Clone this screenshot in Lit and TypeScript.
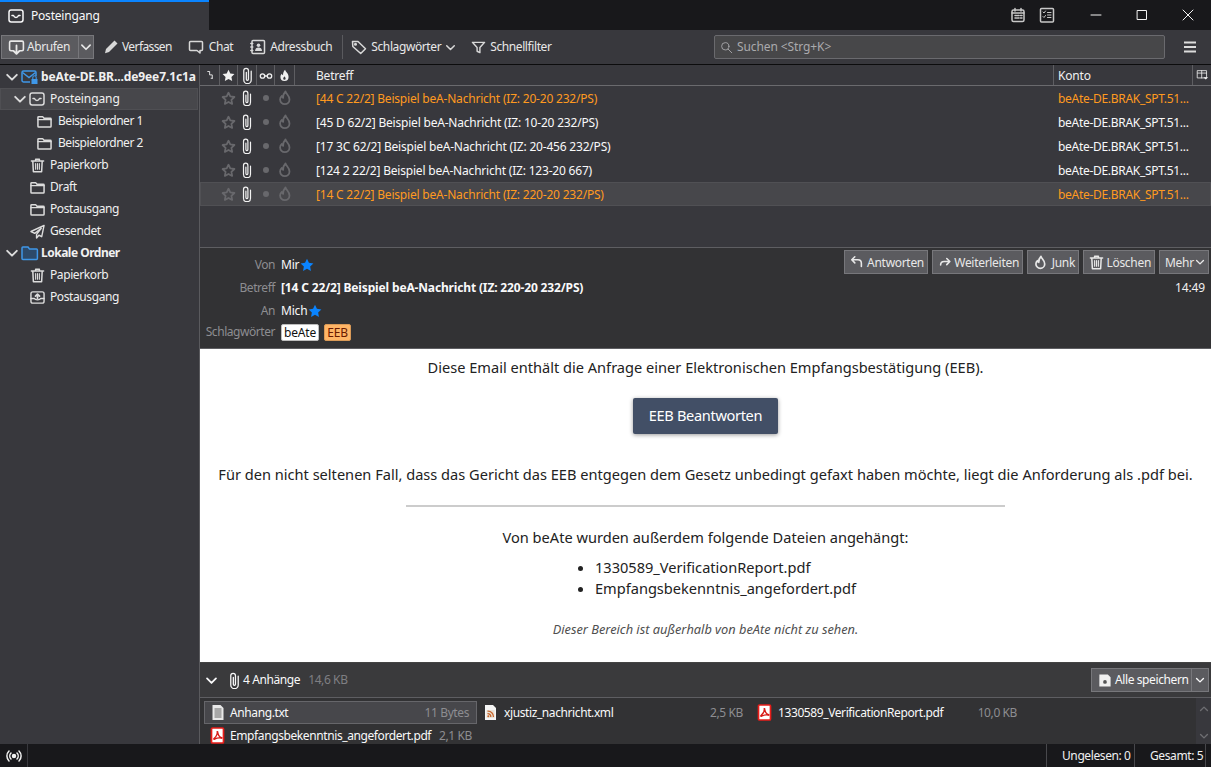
import { LitElement, html, css, svg } from "lit";
import { customElement } from "lit/decorators.js";

const ic = (body: unknown, size = 16, cls = "", vb = "0 0 16 16") =>
  html`<svg class="ic ${cls}" width=${size} height=${size} viewBox=${vb} fill="none" stroke="currentColor" stroke-width="1.500" stroke-linecap="round" stroke-linejoin="round">${body}</svg>`;

const chevron = (size = 12, cls = "") => ic(svg`<path d="M2.500 5.500 8 11l5.500-5.500" stroke-width="2.200"/>`, size, cls);
const inbox = (size = 16) => ic(svg`<rect x="1" y="2" width="14" height="12" rx="2.200"/><path d="M4 7.500h1.500c.6 1.400 1.400 2 2.500 2s1.900-.6 2.500-2H12"/>`, size);
const folder = (size = 16) => ic(svg`<path d="M1 13V3.500C1 3 1.400 2.800 1.800 2.800H6L7.500 4.500H14.200C14.700 4.500 15 4.800 15 5.200V13c0 .5-.3.800-.8.800H1.800C1.300 13.800 1 13.500 1 13Z" stroke-width="1.600"/><path d="M1 6h14"/>`, size);
const trash = (size = 16) => ic(svg`<path d="M1.500 3.200h13M6 3V1.300h4V3M3 3.500l.6 11.200h8.800L13 3.500" stroke-width="1.600"/><path d="M6 6v6M8 6v6M10 6v6" stroke-width="1.200"/>`, size);
const send = (size = 16) => ic(svg`<path d="M15 1.500 1 8l4 2 7-5.500-5 6.500v4l2.500-3 3 1.500Z"/>`, size);
const outbox = (size = 16) => ic(svg`<rect x="1" y="2" width="14" height="12" rx="2"/><path d="M1 9h3.500c.5 1 1.500 1.500 3.500 1.500s3-.5 3.500-1.500H15"/><path d="M8 9V4.500M5.800 6.500 8 4.300l2.200 2.200" stroke-width="1.800"/>`, size);
const star = (size = 16) => ic(svg`<path d="m8 1.800 1.900 4 4.400.6-3.200 3 .8 4.400L8 11.700l-3.900 2.100.8-4.400-3.200-3 4.400-.6Z" stroke-width="1.900"/>`, size);
const starFill = (size = 16, cls = "") => html`<svg class="ic ${cls}" width=${size} height=${size} viewBox="0 0 16 16" fill="currentColor"><path d="m8 .8 2.200 4.700 5.100.7-3.700 3.500.9 5.100L8 12.400l-4.500 2.400.9-5.100L.7 6.200l5.100-.7Z"/></svg>`;
const clip = (size = 16) => ic(svg`<path d="M11.500 4v8.200a3.500 3.500 0 0 1-7 0V3.400a2.200 2.200 0 0 1 4.400 0v8.200a1 1 0 0 1-2 0V5" stroke-width="1.200"/>`, size);
const flame = (size = 16) => ic(svg`<path d="M8.500 1.500c.5 2.500 4 4 4 8a4.700 4.700 0 0 1-9.400 0c0-1.700.8-2.800 1.700-3.600.2 1 .6 1.600 1.300 1.900C6 5.500 7 3 8.500 1.500Z" stroke-width="1.800"/>`, size);
const flameFill = (size = 16) => html`<svg class="ic" width=${size} height=${size} viewBox="0 0 16 16"><path fill="currentColor" d="M8.700 1c.5 2.700 4.300 4.300 4.300 8.700a5 5 0 0 1-10 0c0-1.900.9-3.100 1.800-3.900.2 1.100.6 1.700 1.400 2C6 5.300 7.100 2.600 8.700 1Z"/><path fill="#38383d" d="M8 9c.2 1 1.400 1.600 1.400 2.800a1.500 1.500 0 0 1-3 0C6.400 10.700 7.600 10 8 9Z"/></svg>`;
const pdf = () => html`<svg class="ic" width="15" height="17" viewBox="0 0 15 17"><rect x="1.500" y="1" width="12" height="15" rx="1" fill="#fff" stroke="#e81c18" stroke-width="1.700"/><path d="M7.200 4c.4 2.800-1.300 6-3.200 7.500-.6.500-.2 1.100.6.700 2-1 4.800-1.500 6.700-1 .8.200.8-.7 0-.8-2-.4-3.400-2.700-3.700-6.100" fill="none" stroke="#d81a16" stroke-width="1.300"/></svg>`;
const xml = () => html`<svg class="ic" width="15" height="17" viewBox="0 0 15 17"><path d="M2 1h8l3 3v12H2Z" fill="#f5f5f5"/><rect x="3.500" y="6" width="8" height="8" fill="#e8e2d8"/><path d="M4.500 7.200a5.500 5.500 0 0 1 6 5.800M4.500 9.700a3 3 0 0 1 3.300 3.300" fill="none" stroke="#c8642a" stroke-width="1.300"/><circle cx="5.300" cy="12.300" r="1" fill="#c8642a"/></svg>`;
const txt = () => html`<svg class="ic" width="16" height="17" viewBox="0 0 16 17"><path d="M2.500 1h8l3 3v12h-11Z" fill="#e8e8e8"/><path d="M4.500 5h7M4.500 7h7M4.500 9h7M4.500 11h7M4.500 13h7" stroke="#666" stroke-width="1"/></svg>`;

type Msg = { s: string; c: string; o?: boolean; sel?: boolean };
const msgs: Msg[] = [
  { s: "[44 C 22/2] Beispiel beA-Nachricht (IZ: 20-20 232/PS)", c: "beAte-DE.BRAK_SPT.51...", o: true },
  { s: "[45 D 62/2] Beispiel beA-Nachricht (IZ: 10-20 232/PS)", c: "beAte-DE.BRAK_SPT.51..." },
  { s: "[17 3C 62/2] Beispiel beA-Nachricht (IZ: 20-456 232/PS)", c: "beAte-DE.BRAK_SPT.51..." },
  { s: "[124 2 22/2] Beispiel beA-Nachricht (IZ: 123-20 667)", c: "beAte-DE.BRAK_SPT.51..." },
  { s: "[14 C 22/2] Beispiel beA-Nachricht (IZ: 220-20 232/PS)", c: "beAte-DE.BRAK_SPT.51...", o: true, sel: true },
];

@customElement("app-root")
export class AppRoot extends LitElement {
  static styles = css`
    :host { display: flex; flex-direction: column; width: 1211px; height: 767px; overflow: hidden; background: #38383d; color: #f9f9fa; font: 12px/16px "Noto Sans", "Open Sans", sans-serif; letter-spacing: -0.2px; }
    * { box-sizing: border-box; }
    .ic { flex: none; display: block; }
    .titlebar { height: 30px; background: #18181b; display: flex; align-items: stretch; flex: none; }
    .tab { width: 209px; background: #38383d; border-top: 2px solid #0a84ff; display: flex; align-items: center; gap: 7px; padding: 0 0 0 8px; }
    .tb-spacer { flex: 1; }
    .tb-icons { display: flex; align-items: center; gap: 13px; color: #c8c8c8; margin-right: 18px; }
    .win { width: 46px; display: flex; align-items: center; justify-content: center; color: #f4f4f4; }
    .toolbar { height: 35px; flex: none; background: #38383d; display: flex; align-items: center; padding: 0 0 0 1px; border-bottom: 1px solid #0c0c0d; color: #e8e8e8; letter-spacing: -0.4px; }
    .split { display: flex; height: 24px; width: 93px; background: #5b5b5f; border: 1px solid #77777b; margin-right: 9px; }
    .split .l { width: 77px; display: flex; align-items: center; gap: 2px; padding-left: 6px; border-right: 1px solid #77777b; }
    .split .r { flex: 1; display: flex; align-items: center; justify-content: center; }
    .tbtn { display: flex; align-items: center; gap: 4px; margin-right: 17px; white-space: nowrap; }
    .tbtn .ic { color: #d8d8d8; }
    .tbtn.verf { gap: 3px; letter-spacing: -0.6px; margin-right: 16px; }
    .tbtn.chat { gap: 5px; }
    .tbtn.addr { margin-right: 10px; }
    .tbtn.tags { gap: 4px; margin-right: 15px; }
    .tsep { width: 1px; height: 24px; background: #5a5a5e; margin-right: 8px; }
    .search { width: 451px; height: 24px; margin: 0 4px 0 auto; background: #474749; border: 1px solid #6a6a6e; border-radius: 2px; display: flex; align-items: center; gap: 4px; padding-left: 5px; color: #aaaaad; letter-spacing: -0.1px; }
    .menu { width: 42px; display: flex; justify-content: center; color: #dcdcdc; }
    .main { flex: 1; display: flex; min-height: 0; }
    .side { width: 200px; flex: none; background: #38383d; border-right: 1px solid #5a5a5e; padding-top: 1px; letter-spacing: -0.4px; }
    .f { height: 22px; display: flex; align-items: center; gap: 5px; color: #f0f0f0; white-space: nowrap; }
    .f .ic { color: #dcdcdc; }
    .f.acc { font-weight: 700; padding-left: 5px; gap: 2px; letter-spacing: -0.1px; }
    .f.acc.loc { letter-spacing: -0.5px; }
    .f.acc .blue { color: #3f97e8; }
    .f.sel { background: #47474b; border: 1px solid #4f4f53; padding-left: 12px; gap: 2px; margin-right: 1px; letter-spacing: -0.1px; }
    .f.sel span { margin-left: 3px; }
    .f.l1 { padding-left: 30px; }
    .f.l2 { padding-left: 37px; gap: 6px; letter-spacing: -0.45px; }
    .right { flex: 1; min-width: 0; display: flex; flex-direction: column; }
    .thread { height: 183px; flex: none; background: #38383d; border-bottom: 1px solid #5e5e62; }
    .thead { height: 21px; display: flex; border-bottom: 1px solid #6a6a6e; color: #f0f0f0; }
    .th { display: flex; align-items: center; justify-content: center; border-right: 1px solid #5e5e62; padding-top: 1px; }
    .th1 { width: 20px; } .th2 { width: 18px; } .th3 { width: 19px; } .th4 { width: 18px; } .th5 { width: 20px; }
    .th6 { width: 759px; justify-content: flex-start; padding-left: 21px; }
    .th7 { width: 139px; justify-content: flex-start; padding-left: 4px; }
    .th8 { flex: 1; border: 0; }
    .row { height: 24px; display: flex; align-items: center; color: #f9f9fa; border: 1px solid transparent; }
    .row.o { color: #ff9a1f; }
    .row.sel { background: #47474b; border-color: #505054; }
    .cell { display: flex; align-items: center; justify-content: center; flex: none; width: 19px; }
    .cell.c0, .cell.c2 { width: 18px; }
    .dim { color: #68686c; }
    .white { color: #f2f2f2; }
    .subj { width: 760px; padding: 1px 0 0 22px; white-space: nowrap; flex: none; }
    .acct { padding: 1px 0 0 4px; white-space: nowrap; letter-spacing: -0.3px; }
    .dot { width: 6px; height: 6px; border-radius: 50%; background: #68686c; }
    .hdr { height: 101px; flex: none; background: #323234; padding: 2px 2px 0 0; border-bottom: 1px solid #5e5e62; }
    .hrow { display: flex; align-items: center; white-space: nowrap; }
    .lab { width: 75px; text-align: right; color: #8d8d91; margin-right: 6px; flex: none; letter-spacing: -0.45px; }
    .hr1 { height: 26px; align-items: flex-start; }
    .hr1 .who { display: flex; align-items: center; margin-top: 7px; }
    .hr2 { height: 22px; padding-top: 1px; letter-spacing: -0.15px; }
    .hr3 { height: 21px; margin-top: 2px; }
    .hr4 { height: 22px; }
    .hblue { color: #0a84ff; }
    .hr1 .hblue, .hr3 .hblue { margin-left: 1px; }
    .tag { height: 17px; line-height: 15px; border-radius: 2px; padding: 0 2px; border: 1px solid #bdbdbd; margin-right: 5px; }
    .tag.w { background: #fff; color: #111; width: 38px; text-align: center; }
    .tag.e { background: #ffb566; color: #6a1a00; border-color: #d99a58; width: 27px; text-align: center; }
    .actions { margin-left: auto; display: flex; gap: 4px; letter-spacing: -0.3px; }
    .hbtn { height: 24px; display: flex; align-items: center; justify-content: space-between; padding: 1px 3px 0 5px; background: #5b5b5f; border: 1px solid #77777b; color: #e8e8e8; }
    .hbtn .ic { margin-top: -1px; }
    .b1 { width: 84px; } .b2 { width: 91px; } .b3 { width: 52px; } .b4 { width: 72px; } .b5 { width: 50px; }
    .time { margin-left: auto; padding-right: 4px; color: #f0f0f0; }
    .body { height: 314px; flex: none; background: #fff; color: #222; text-align: center; font-size: 14.600px; line-height: 20px; padding-top: 8px; display: flex; flex-direction: column; align-items: center; border-bottom: 1px solid #444; letter-spacing: 0; }
    .eeb { width: 145px; height: 36px; margin: 21px 0 30px; padding-bottom: 2px; background: #424f66; color: #fff; border-radius: 2px; box-shadow: 0 1px 4px rgba(0,0,0,.4); display: flex; align-items: center; justify-content: center; letter-spacing: -0.35px; }
    .long { white-space: nowrap; }
    hr { width: 599px; height: 2px; margin: 21px 0 20px; border: 0; background: #ccc; }
    ul { margin: 10px 0 0; padding: 0 0 0 40px; text-align: left; list-style: disc; }
    li { height: 21px; }
    .note { margin-top: 20px; font-style: italic; font-size: 12.800px; color: #4f4f4f; }
    .attbar { height: 35px; flex: none; background: #3a3a3c; border-bottom: 1px solid #5e5e62; display: flex; align-items: center; padding: 0 2px 0 5px; letter-spacing: -0.4px; }
    .attbar .sz { color: #7f7f83; margin-left: 8px; }
    .clipgap { margin-left: 8px; }
    .save { margin-left: auto; height: 24px; width: 118px; display: flex; background: #5b5b5f; border: 1px solid #77777b; }
    .save .l { flex: 1; display: flex; align-items: center; gap: 3px; padding-left: 5px; border-right: 1px solid #77777b; }
    .save .r { width: 16px; display: flex; align-items: center; justify-content: center; }
    .atts { flex: 1; min-height: 0; background: #323234; display: flex; padding: 3px 0 0 4px; overflow: hidden; letter-spacing: -0.4px; }
    .agrid { flex: 1; display: grid; grid-template-columns: 279px 274px 1fr; grid-auto-rows: 23px; justify-items: start; align-content: start; }
    .a { height: 23px; display: flex; align-items: center; padding: 0 7px 0 6px; white-space: nowrap; width: 273px; }
    .a .ic { margin-right: 5px; }
    .a .n { flex: 1; }
    .a .s { color: #8d8d91; }
    .a.sel { background: #47474b; border: 1px solid #66666a; padding-left: 5px; }
    .a.sel .ic { margin-right: 4px; }
    .a.pad { padding-left: 0; width: 267px; }
    .a.pad .ic { margin-right: 6px; }
    .a.w { width: auto; }
    .a.w .s { margin-left: 8px; }
    .sb { width: 15px; flex: none; margin-top: -3px; background: #38383d; color: #6e6e72; display: flex; flex-direction: column; justify-content: space-between; align-items: center; padding: 6px 0 3px; }
    .sb .up { transform: rotate(180deg); }
    .status { height: 23px; flex: none; background: #18181b; display: flex; align-items: center; color: #f0f0f0; white-space: nowrap; letter-spacing: -0.4px; }
    .sicon { width: 28px; height: 100%; display: flex; align-items: center; justify-content: center; border-right: 1px solid #38383d; }
    .st { margin-left: auto; display: flex; height: 100%; align-items: center; margin-right: 5px; }
    .st span { width: 88px; padding-left: 15px; border-left: 1px solid #48484c; line-height: 23px; }
    .st span:last-child { width: 72px; border-right: 1px solid #48484c; }
  `;

  render() {
    return html`
      <div class="titlebar">
        <div class="tab">${inbox(16)}<span>Posteingang</span></div>
        <div class="tb-spacer"></div>
        <div class="tb-icons">
          ${ic(svg`<rect x="2" y="3" width="12" height="11.500" rx="1.500"/><path d="M5 1.500V4M11 1.500V4M2 6h12"/><path d="M5 8.500h1.500M7.500 8.500h1.500M10.500 8.500H12M5 11h1.500M7.500 11h1.500M10.500 11H12" stroke-width="1.500"/>`, 16)}
          ${ic(svg`<rect x="1.500" y="1.500" width="13" height="13.500" rx="1"/><path d="M4 5l1 1 1.500-2M4 9.500l1 1 1.500-2M8.500 5.500H12M8.500 8H12M8.500 10.500H12" stroke-width="1"/>`, 16)}
        </div>
        <div class="win">${ic(svg`<path d="M3 8h10" stroke-width="1"/>`, 16)}</div>
        <div class="win">${ic(svg`<rect x="3.500" y="3.500" width="9" height="9" stroke-width="1"/>`, 16)}</div>
        <div class="win">${ic(svg`<path d="m3 3 10 10M13 3 3 13" stroke-width="1"/>`, 16)}</div>
      </div>
      <div class="toolbar">
        <div class="split">
          <div class="l">${ic(svg`<path d="M4.500 11H2.800C2 11 1.500 10.500 1.500 9.700V3.300C1.500 2.500 2 2 2.800 2h10.400c.8 0 1.300.5 1.300 1.300v6.400c0 .8-.5 1.300-1.300 1.300H11.500"/><path d="M8 6v8M5.300 11.300 8 14l2.700-2.700" stroke-width="1.700"/>`, 17)}<span>Abrufen</span></div>
          <div class="r">${chevron(12)}</div>
        </div>
        <div class="tbtn verf">${html`<svg class="ic" width="16" height="16" viewBox="0 0 16 16" fill="currentColor"><path d="M11.500 1.500 14.500 4.500 6 13l-4 1.200L3 10Z"/></svg>`}<span>Verfassen</span></div>
        <div class="tbtn chat">${ic(svg`<path d="M2.500 2.500h11c.6 0 1 .4 1 1v7c0 .6-.4 1-1 1H12v2.500L9 11.500H2.500c-.6 0-1-.4-1-1v-7c0-.6.4-1 1-1Z"/>`, 16)}<span>Chat</span></div>
        <div class="tbtn addr">${ic(svg`<rect x="2" y="1.500" width="12.500" height="13" rx="1"/><path d="M.8 4.500h2M.8 8h2M.8 11.500h2"/><circle cx="8.500" cy="6.200" r="1.800" fill="currentColor" stroke="none"/><path d="M5 12c.2-2.500 1.500-3.500 3.500-3.500S12 9.500 12 12Z" fill="currentColor" stroke="none"/>`, 16)}<span>Adressbuch</span></div>
        <div class="tsep"></div>
        <div class="tbtn tags">${ic(svg`<path d="M1.500 2.500h5.500l7.500 7.300-4.800 4.700L1.800 7.500Z"/><circle cx="4.500" cy="5.200" r=".8"/>`, 16)}<span>Schlagwörter</span>${chevron(11)}</div>
        <div class="tbtn">${ic(svg`<path d="M1.500 2.500h13L9.500 8v5.500l-3-1.500V8Z"/>`, 15)}<span>Schnellfilter</span></div>
        <div class="search">${ic(svg`<circle cx="6.500" cy="6.500" r="4.500" stroke-width="1.100"/><path d="m10 10 4.500 4.500" stroke-width="1.100"/>`, 13)}<span>Suchen &lt;Strg+K&gt;</span></div>
        <div class="menu">${ic(svg`<path d="M2 3.500h12M2 8h12M2 12.500h12" stroke-width="1.800" stroke-linecap="butt"/>`, 16)}</div>
      </div>
      <div class="main">
        <div class="side">
          <div class="f acc">${chevron(14)}<svg class="ic blue" width="18" height="16" viewBox="0 0 18 16" fill="none" stroke="currentColor" stroke-width="1.500"><path d="M9 13H2.500c-.8 0-1.500-.6-1.500-1.400V3.400C1 2.600 1.700 2 2.500 2h11c.8 0 1.500.6 1.500 1.400V7"/><path d="m1.500 3.500 6.500 5 6.500-5"/><rect x="10.500" y="10" width="6" height="5" fill="currentColor" stroke="none"/><path d="M11.800 10V8.500a1.700 1.700 0 0 1 3.400 0V10" stroke-width="1.100"/></svg><span>beAte-DE.BR...de9ee7.1c1a</span></div>
          <div class="f sel">${chevron(14)}${inbox(16)}<span>Posteingang</span></div>
          <div class="f l2">${folder(15)}<span>Beispielordner 1</span></div>
          <div class="f l2">${folder(15)}<span>Beispielordner 2</span></div>
          <div class="f l1">${trash(15)}<span>Papierkorb</span></div>
          <div class="f l1">${folder(15)}<span>Draft</span></div>
          <div class="f l1">${folder(15)}<span>Postausgang</span></div>
          <div class="f l1">${send(15)}<span>Gesendet</span></div>
          <div class="f acc loc">${chevron(14)}<svg class="ic blue" width="18" height="16" viewBox="0 0 18 16" fill="none" stroke="currentColor" stroke-width="1.500"><path d="M1 13.500V3c0-.5.4-.9.9-.9H7L8.500 4H15.500c.5 0 .9.4.9.9v8.600c0 .5-.4.900-.9.900H1.900c-.5 0-.9-.4-.9-.9Z" fill="#2d4a6a"/></svg><span>Lokale Ordner</span></div>
          <div class="f l1">${trash(15)}<span>Papierkorb</span></div>
          <div class="f l1">${outbox(15)}<span>Postausgang</span></div>
        </div>
        <div class="right">
          <div class="thread">
            <div class="thead">
              <div class="th th1">${ic(svg`<path d="M5 2h2.500v4.500H11V11M11 11h-1.500" stroke-width="1.200"/>`, 12, "white")}</div>
              <div class="th th2">${starFill(13, "white")}</div>
              <div class="th th3">${clip(17)}</div>
              <div class="th th4">${ic(svg`<circle cx="4" cy="8" r="2.500"/><circle cx="12" cy="8" r="2.500"/><path d="M6.500 8h3"/>`, 14)}</div>
              <div class="th th5">${flameFill(13)}</div>
              <div class="th th6">Betreff</div>
              <div class="th th7">Konto</div>
              <div class="th th8">${ic(svg`<path d="M2 2h11v9H2ZM2 5h11M7 2v9" stroke-width="1"/><path d="M9 10h6l-3 3Z" fill="currentColor" stroke="none"/>`, 13)}</div>
            </div>
            ${msgs.map(m => html`
              <div class="row ${m.o ? "o" : ""} ${m.sel ? "sel" : ""}">
                <div class="cell c0"></div>
                <div class="cell dim">${star(15)}</div>
                <div class="cell c2 white">${clip(16)}</div>
                <div class="cell"><div class="dot"></div></div>
                <div class="cell dim">${flame(16)}</div>
                <div class="subj">${m.s}</div>
                <div class="acct">${m.c}</div>
              </div>`)}
          </div>
          <div class="hdr">
            <div class="hrow hr1"><div class="who"><span class="lab">Von</span><span>Mir</span>${starFill(14, "hblue")}</div>
              <div class="actions">
                <div class="hbtn b1">${ic(svg`<path d="M5.500 2 2 5.500 5.500 9M2.500 5.500H9c2.500 0 4 1.500 4 4V13" stroke-width="1.800"/>`, 14)}<span>Antworten</span></div>
                <div class="hbtn b2">${ic(svg`<path d="M10 4l3.500 3.500L10 11M13 7.500H7C4.500 7.500 3 9 3 11.500" stroke-width="1.800"/>`, 14)}<span>Weiterleiten</span></div>
                <div class="hbtn b3">${flame(15)}<span>Junk</span></div>
                <div class="hbtn b4">${trash(15)}<span>Löschen</span></div>
                <div class="hbtn b5">Mehr${chevron(10)}</div>
              </div>
            </div>
            <div class="hrow hr2"><span class="lab">Betreff</span><b>[14 C 22/2] Beispiel beA-Nachricht (IZ: 220-20 232/PS)</b><span class="time">14:49</span></div>
            <div class="hrow hr3"><span class="lab">An</span><span>Mich</span>${starFill(14, "hblue")}</div>
            <div class="hrow hr4"><span class="lab">Schlagwörter</span><span class="tag w">beAte</span><span class="tag e">EEB</span></div>
          </div>
          <div class="body">
            <div>Diese Email enthält die Anfrage einer Elektronischen Empfangsbestätigung (EEB).</div>
            <div class="eeb">EEB Beantworten</div>
            <div class="long">Für den nicht seltenen Fall, dass das Gericht das EEB entgegen dem Gesetz unbedingt gefaxt haben möchte, liegt die Anforderung als .pdf bei.</div>
            <hr />
            <div>Von beAte wurden außerdem folgende Dateien angehängt:</div>
            <ul><li>1330589_VerificationReport.pdf</li><li>Empfangsbekenntnis_angefordert.pdf</li></ul>
            <div class="note">Dieser Bereich ist außerhalb von beAte nicht zu sehen.</div>
          </div>
          <div class="attbar">
            ${chevron(13)}
            <span class="clipgap">${clip(17)}</span>
            <span class="count">4 Anhänge</span><span class="sz">14,6 KB</span>
            <div class="save">
              <div class="l">${html`<svg class="ic" width="15" height="15" viewBox="0 0 16 16"><path d="M2.500 1.500h9L14.500 4.500v10h-12Z" fill="#f0f0f0"/><circle cx="8.500" cy="9.500" r="2" fill="#555"/></svg>`}<span>Alle speichern</span></div>
              <div class="r">${chevron(10)}</div>
            </div>
          </div>
          <div class="atts">
            <div class="agrid">
              <div class="a sel">${txt()}<span class="n">Anhang.txt</span><span class="s">11 Bytes</span></div>
              <div class="a pad">${xml()}<span class="n">xjustiz_nachricht.xml</span><span class="s">2,5 KB</span></div>
              <div class="a pad">${pdf()}<span class="n">1330589_VerificationReport.pdf</span><span class="s">10,0 KB</span></div>
              <div class="a w">${pdf()}<span class="n">Empfangsbekenntnis_angefordert.pdf</span><span class="s">2,1 KB</span></div>
            </div>
            <div class="sb"><span class="up">${chevron(10)}</span>${chevron(10)}</div>
          </div>
        </div>
      </div>
      <div class="status">
        <div class="sicon">${ic(svg`<circle cx="8" cy="8" r="1.500" fill="currentColor"/><path d="M5 5a4.300 4.300 0 0 0 0 6M11 5a4.300 4.300 0 0 1 0 6M3 3a7 7 0 0 0 0 10M13 3a7 7 0 0 1 0 10"/>`, 16)}</div>
        <div class="st"><span>Ungelesen: 0</span><span>Gesamt: 5</span></div>
      </div>
    `;
  }
}
